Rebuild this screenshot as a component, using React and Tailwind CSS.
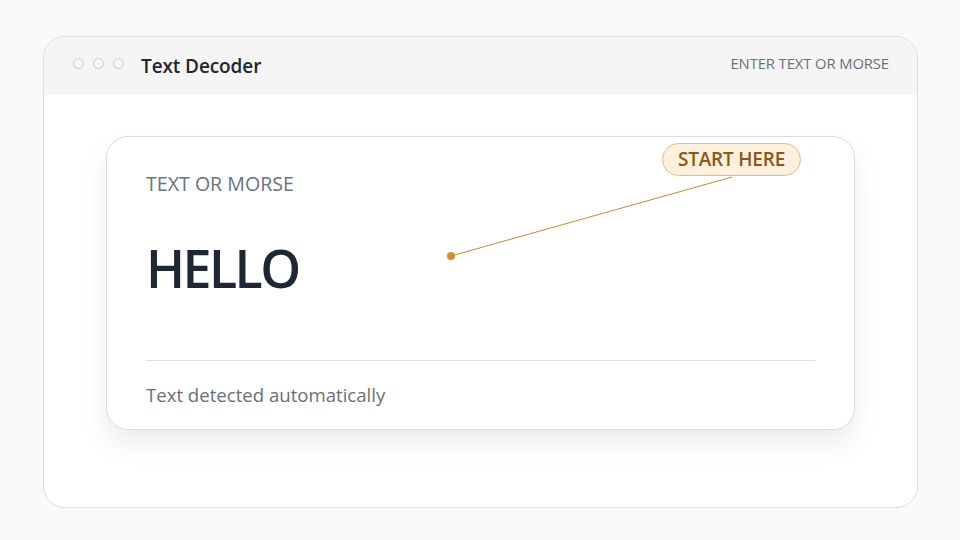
import React from 'react';

const font = { fontFamily: '"Open Sans", "Noto Sans", sans-serif' };

export default function App() {
  return (
    <div className="w-[960px] h-[540px] bg-[#f9f9f8] pt-[36px] pl-[43px]" style={font}>
      <div className="w-[875px] h-[472px] rounded-[22px] border border-[#dedede] bg-white overflow-hidden flex flex-col">
        {/* HEADER */}
        <div className="h-[58px] bg-[#f4f5f4] flex items-center pl-[29px] pr-[28px] shrink-0">
          <div className="flex gap-[9px] -mt-[6px]">
            <span className="w-[11px] h-[11px] rounded-full border border-[#c9c9c9] bg-[#f7f7f7]" />
            <span className="w-[11px] h-[11px] rounded-full border border-[#c9c9c9] bg-[#f7f7f7]" />
            <span className="w-[11px] h-[11px] rounded-full border border-[#c9c9c9] bg-[#f7f7f7]" />
          </div>
          <div className="ml-[17px] text-[19px] font-semibold text-[#222631] tracking-[-0.1px]">Text Decoder</div>
          <div className="ml-auto -mt-[6px] text-[14.8px] font-medium text-[#6b7078] tracking-[-0.1px]">ENTER TEXT OR MORSE</div>
        </div>

        {/* BODY */}
        <div className="pt-[41px] pl-[62px]">
          <div className="relative w-[749px] h-[294px] rounded-[22px] border border-[#dcdcdc] bg-white shadow-[0_14px_28px_rgba(0,0,0,0.08)] px-[39px] pt-[35px] flex flex-col">
            <div className="text-[19.6px] leading-6 font-medium text-[#6b7280]">TEXT OR MORSE</div>
            <div className="mt-[44px] text-[52px] leading-[56px] font-semibold text-[#1f2735] tracking-[-2.6px]">HELLO</div>
            <div className="mt-[64px] h-px bg-[#dfdfdf]" />
            <div className="mt-[22px] text-[18.6px] leading-6 text-[#6b7078]">Text detected automatically</div>

            {/* callout */}
            <svg className="absolute left-0 top-0 pointer-events-none" width="749" height="294">
              <line x1="625" y1="40" x2="344" y2="119" stroke="#c98a2c" strokeWidth="1" />
              <circle cx="344" cy="119" r="4" fill="#d38f30" />
            </svg>
            <div className="absolute left-[555px] top-[6px] h-[33px] w-[139px] justify-center rounded-full border border-[#e2bc7c] bg-[#fdf0dd] flex items-center text-[19px] font-semibold text-[#8b5716] tracking-[-0.2px]">
              START HERE
            </div>
          </div>
        </div>
      </div>
    </div>
  );
}
